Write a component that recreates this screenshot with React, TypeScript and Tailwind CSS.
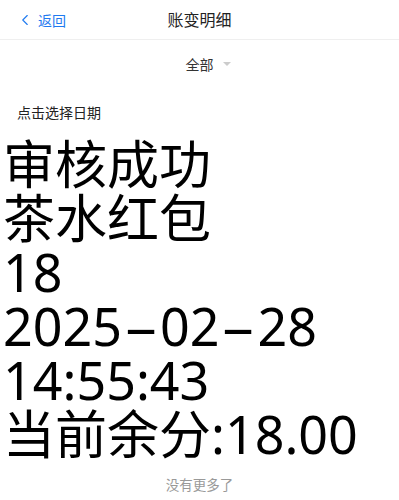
import { ChevronLeft } from 'lucide-react'

const lines = ['审核成功', '茶水红包', '18', '2025-02-28', '14:55:43', '当前余分:18.00']

// hyphens in the reference render long and wide, like a minus sign
function Line({ text }: { text: string }) {
  const parts = text.split('-')
  return (
    <div>
      {parts.map((p, i) => (
        <span key={i}>
          {i > 0 && <span className="inline-block w-[38px] scale-x-[2.1] text-center">-</span>}
          {p}
        </span>
      ))}
    </div>
  )
}

export default function App() {
  return (
    <div className="min-h-[500px] w-[399px] bg-white font-['Noto_Sans','Noto_Sans_CJK_SC',sans-serif] text-black">
      <header className="relative flex h-10 items-center justify-center border-b border-[#efefef]">
        <div className="absolute left-[16px] top-0 flex h-10 items-center gap-[4px] text-[14px] text-[#1f7af0]">
          <ChevronLeft className="h-[18px] w-[18px]" strokeWidth={1.5} />
          <span>返回</span>
        </div>
        <h1 className="text-[16px] text-[#222]">账变明细</h1>
      </header>

      <div className="flex h-[48px] items-center justify-center text-[14px] text-[#333]">
        <span className="relative">
          全部
          <span className="absolute left-[calc(100%+9px)] top-1/2 h-0 w-0 -translate-y-1/2 border-x-[4px] border-t-[4px] border-x-transparent border-t-[#ccc]" />
        </span>
      </div>

      <div className="flex h-[49px] items-center pl-[17px] text-[14px] text-[#222]">点击选择日期</div>

      <div className="pl-[3px] text-[52px] leading-[54px]">
        {lines.map((line) => (
          <Line key={line} text={line} />
        ))}
      </div>

      <div className="flex h-[40px] items-center justify-center pt-[8px] text-[13.5px] text-[#999]">没有更多了</div>
    </div>
  )
}
